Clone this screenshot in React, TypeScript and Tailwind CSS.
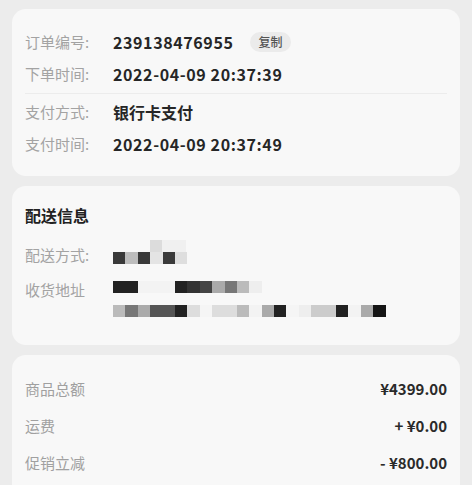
const font = { fontFamily: '"Noto Sans CJK SC", "Noto Sans", sans-serif' };

const addrRow1 = [
  "#3a3a3a", "#bdbdbd", "#3a3a3a", "#e4e4e4", "#3a3a3a", "#dedede",
];
const addrRow2 = [
  "#222222", "#222222", "#f3f3f3", "#f3f3f3", "#f3f3f3", "#222222", "#333333",
  "#444444", "#aaaaaa", "#777777", "#bbbbbb", "#eeeeee",
];
const addrRow3 = [
  "#bbbbbb", "#777777", "#aaaaaa", "#555555", "#555555", "#222222", "#dddddd",
  "#f5f5f5", "#dddddd", "#dddddd", "#bbbbbb", "#f3f3f3", "#aaaaaa", "#222222",
  "#f5f5f5", "#eeeeee", "#cccccc", "#cccccc", "#222222", "#f3f3f3", "#aaaaaa",
  "#151515",
];

function Mosaic({ colors }: { colors: string[] }) {
  return (
    <div className="flex h-[12px]">
      {colors.map((c, i) => (
        <div key={i} className="h-full w-[12.4px] blur-[0.6px]" style={{ backgroundColor: c }} />
      ))}
    </div>
  );
}

function InfoRow({ label, children }: { label: string; children: React.ReactNode }) {
  return (
    <div className="flex h-[32px] items-center">
      <span className="w-[88px] shrink-0 text-[15px] text-[#a3a3a3]">{label}</span>
      {children}
    </div>
  );
}

function PriceRow({ label, value }: { label: string; value: string }) {
  return (
    <div className="flex h-[37px] items-center justify-between">
      <span className="text-[15px] text-[#a0a0a0]">{label}</span>
      <span className="text-[15px] font-semibold text-[#2a2a2a]">{value}</span>
    </div>
  );
}

export default function App() {
  return (
    <div className="flex h-[485px] flex-col gap-[10px] overflow-hidden bg-[#ececec] px-[12px] pt-[9px]" style={font}>
      <div className="rounded-[14px] bg-[#f8f8f8] px-[13px] pb-[16px] pt-[17px]">
        <InfoRow label="订单编号:">
          <span className="text-[16px] font-bold tracking-[0.6px] text-[#262626]">239138476955</span>
          <span className="ml-[17px] rounded-full bg-[#ebebeb] px-[8px] py-[1px] text-[12px] font-medium text-[#555]">复制</span>
        </InfoRow>
        <InfoRow label="下单时间:">
          <span className="text-[16px] font-bold tracking-[0.6px] text-[#262626]">2022-04-09 20:37:39</span>
        </InfoRow>
        <div className="mb-[2px] mt-[3px] h-px bg-[#ececec]" />
        <InfoRow label="支付方式:">
          <span className="text-[16px] font-bold text-[#262626]">银行卡支付</span>
        </InfoRow>
        <InfoRow label="支付时间:">
          <span className="text-[16px] font-bold tracking-[0.6px] text-[#262626]">2022-04-09 20:37:49</span>
        </InfoRow>
      </div>

      <div className="h-[159px] rounded-[14px] bg-[#f8f8f8] px-[13px] pt-[17px]">
        <div className="flex h-[24px] items-center text-[16px] font-bold text-[#222]">配送信息</div>
        <div className="mt-[13px] flex">
          <span className="w-[88px] shrink-0 pt-[2px] text-[15px] leading-[26px] text-[#a3a3a3]">配送方式:</span>
          <div className="flex flex-col">
            <div className="flex h-[12px] pl-[37px]">
              <div className="h-full w-[12.4px] bg-[#dcdcdc] blur-[0.6px]" />
              <div className="h-full w-[24px] bg-[#f0f0f0] blur-[0.6px]" />
            </div>
            <Mosaic colors={addrRow1} />
          </div>
        </div>
        <div className="mt-[10px] flex">
          <span className="w-[88px] shrink-0 text-[15px] leading-[24px] text-[#a3a3a3]">收货地址</span>
          <div className="flex flex-col gap-[12px] pt-[3px]">
            <Mosaic colors={addrRow2} />
            <Mosaic colors={addrRow3} />
          </div>
        </div>
      </div>

      <div className="flex-1 rounded-t-[14px] bg-[#f8f8f8] px-[13px] pt-[16px]">
        <PriceRow label="商品总额" value="¥4399.00" />
        <PriceRow label="运费" value="+ ¥0.00" />
        <PriceRow label="促销立减" value="- ¥800.00" />
      </div>
    </div>
  );
}
